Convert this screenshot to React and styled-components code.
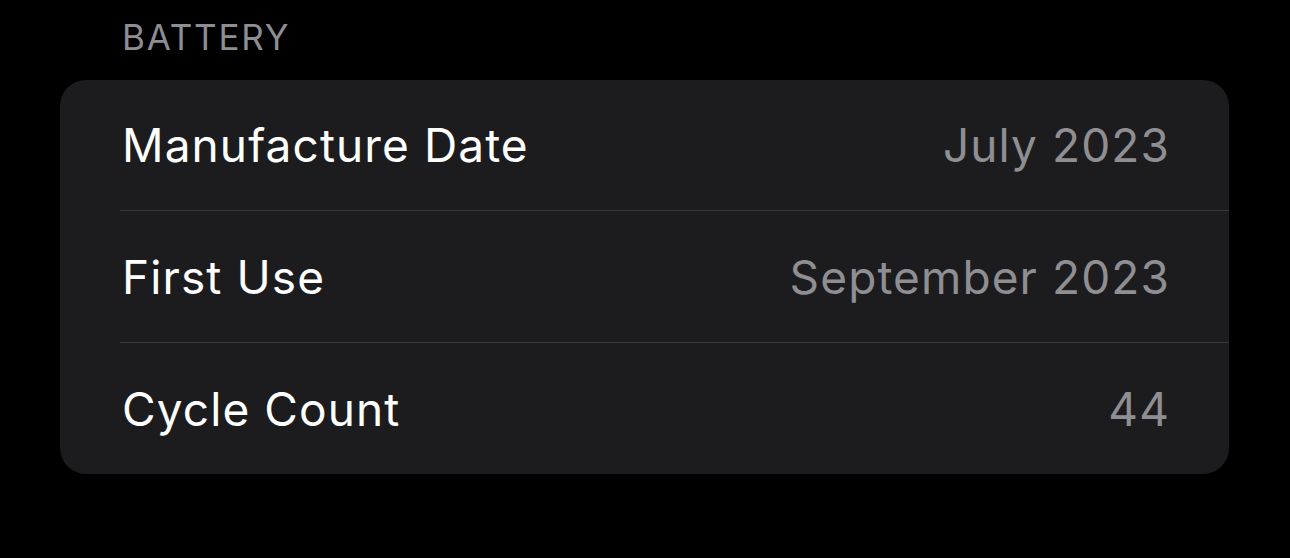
import styled, { createGlobalStyle } from "styled-components";

const GlobalStyle = createGlobalStyle`
  html, body {
    margin: 0;
    padding: 0;
    background: #000;
  }
  body {
    font-family: Inter, "Noto Sans", "Liberation Sans", sans-serif;
    -webkit-font-smoothing: antialiased;
  }
`;

const rows = [
  { label: "Manufacture Date", value: "July 2023" },
  { label: "First Use", value: "September 2023" },
  { label: "Cycle Count", value: "44" },
];

const Page = styled.div`
  width: 1290px;
  height: 558px;
  background: #000;
  padding: 14px 61px 0 60px;
  box-sizing: border-box;
`;

const SectionHeader = styled.div`
  padding-left: 62px;
  height: 46px;
  display: flex;
  align-items: center;
  font-size: 35px;
  letter-spacing: 1.8px;
  color: #8d8d93;
  text-transform: uppercase;
  margin-bottom: 20px;
`;

const Card = styled.div`
  background: #1c1c1e;
  border-radius: 26px;
  overflow: hidden;
`;

const Row = styled.div`
  display: flex;
  align-items: center;
  justify-content: space-between;
  height: ${({ $first }) => ($first ? "130px" : "132px")};
  margin-left: 60px;
  padding: 0 60px 0 2px;
  border-top: ${({ $first }) => ($first ? "none" : "1.5px solid #38383a")};
  box-sizing: border-box;
`;

const Label = styled.span`
  font-size: 46px;
  color: #fff;
  letter-spacing: 1.1px;
`;

const Value = styled.span`
  font-size: 46px;
  color: #8e8e93;
  letter-spacing: 1.1px;
  margin-right: -1px;
`;

export default function App() {
  return (
    <>
      <GlobalStyle />
      <Page>
        <SectionHeader>Battery</SectionHeader>
        <Card>
          {rows.map((row, index) => (
            <Row key={row.label} $first={index === 0}>
              <Label>{row.label}</Label>
              <Value>{row.value}</Value>
            </Row>
          ))}
        </Card>
      </Page>
    </>
  );
}
